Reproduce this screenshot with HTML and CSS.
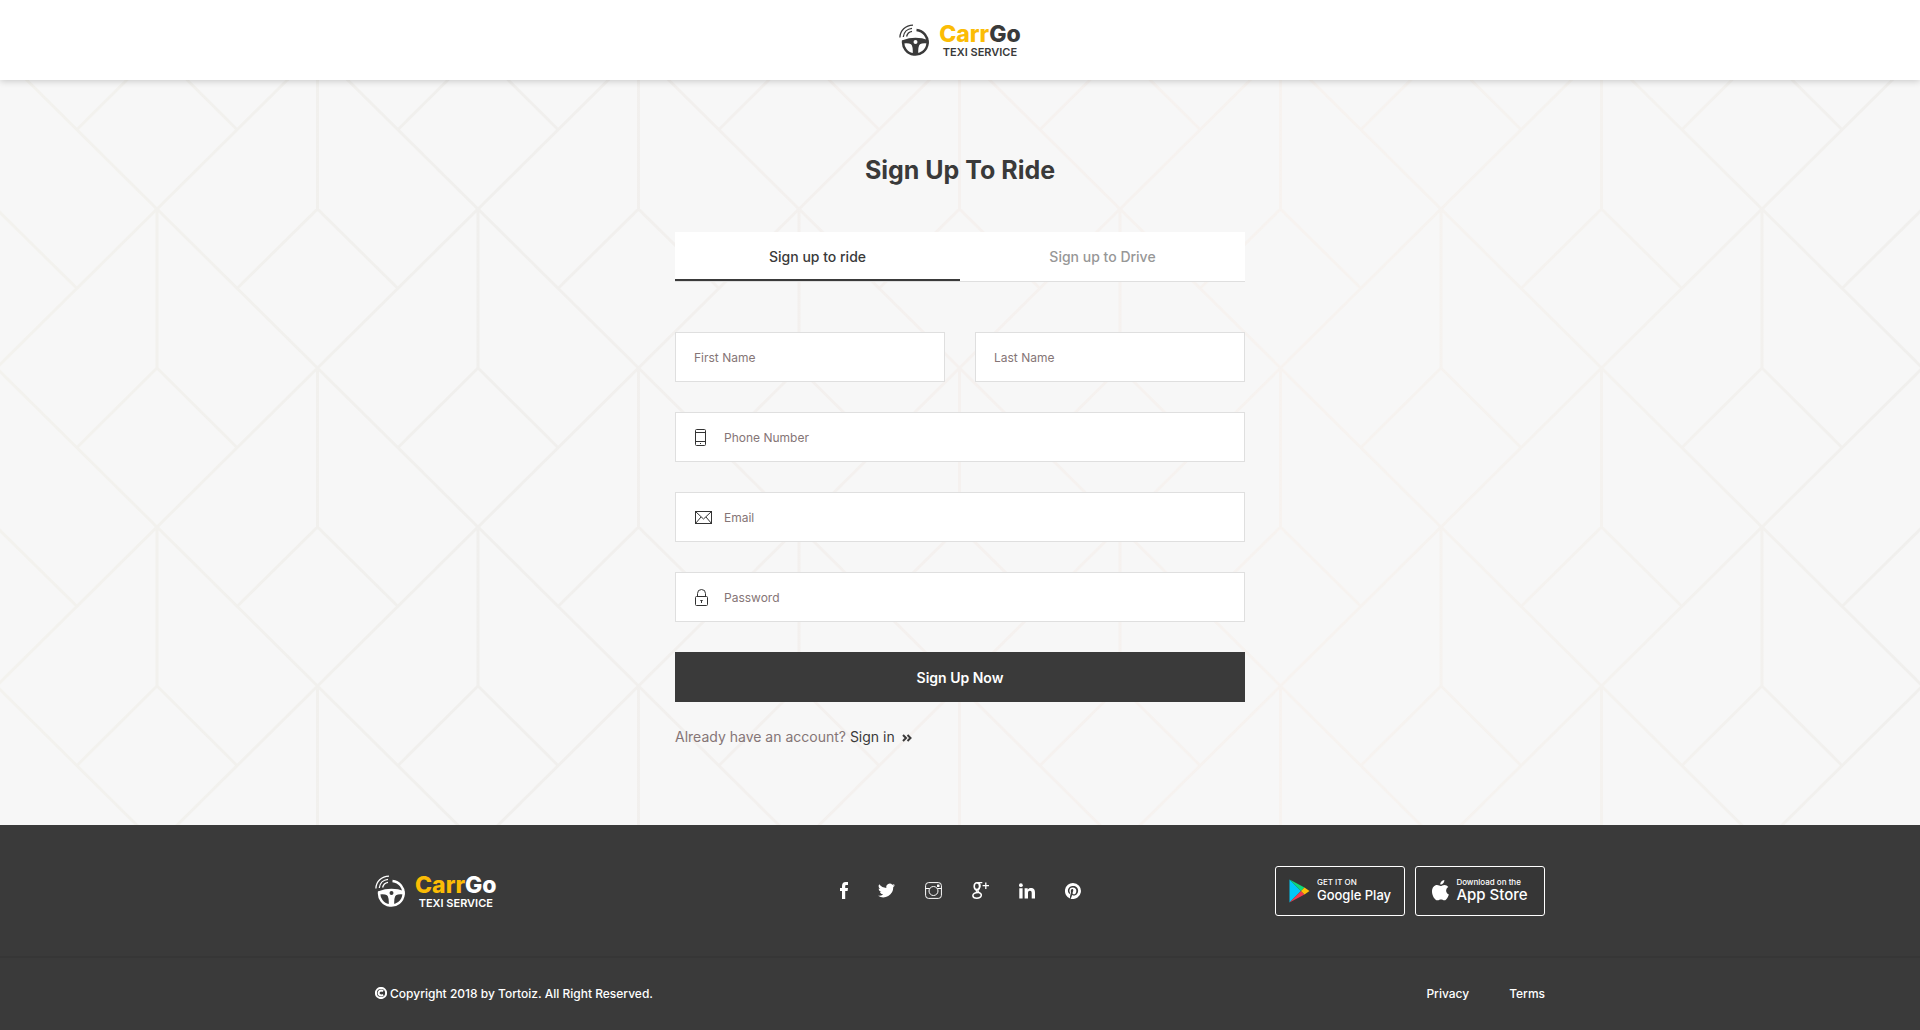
FILE: index.html
```html
<!DOCTYPE html>
<html lang="en">
<head>
    <meta charset="UTF-8">
    <meta name="viewport" content="width=device-width, initial-scale=1.0">
    <title>CarrGo - Sign Up</title>
    <link rel="stylesheet" href="styles.css">
</head>
<body>
    <!-- shared shapes -->
    <svg class="defs" aria-hidden="true">
        <symbol id="wheel" viewBox="0 0 31 32">
            <g fill="none" stroke="currentColor">
                <path stroke-width="2.500" d="M17.500 6A12.300 12.300 0 1 1 4.200 16.400"/>
                <path stroke-width="1.300" d="M.9 13.500C1 6.500 6.500 1.200 14 1.100M4.300 13C4.800 8.200 8.300 4.700 13 4.300M7.600 12.500C8.200 9.800 10.300 7.800 13 7.300"/>
            </g>
            <path fill="currentColor" fill-rule="evenodd" d="M3.500 16.200Q16.500 11.500 29.500 16.200V19.500Q23.500 18.600 21 20.200 18.800 22 19.300 30.500H13.700Q14.200 22 12 20.200 9.500 18.600 3.500 19.500ZM16.500 16a2 2 0 1 0 0 4 2 2 0 0 0 0-4Z"/>
        </symbol>
    </svg>

    <header class="header">
        <a href="#" class="logo">
            <svg class="logo-icon" aria-hidden="true"><use href="#wheel"/></svg>
            <span class="logo-text">
                <span class="logo-name"><span class="logo-accent">Carr</span>Go</span>
                <span class="logo-tag">TEXI SERVICE</span>
            </span>
        </a>
    </header>

    <main class="main">
        <svg class="pattern" aria-hidden="true">
            <defs>
                <linearGradient id="fade">
                    <stop offset="0" stop-color="#f3f2ee"/>
                    <stop offset=".26" stop-color="#f0efed"/>
                    <stop offset=".5" stop-color="#f5f1ef"/>
                    <stop offset=".68" stop-color="#f7f3f0"/>
                    <stop offset=".85" stop-color="#f4f2ef"/>
                    <stop offset="1" stop-color="#f0efed"/>
                </linearGradient>
                <pattern id="lines" patternUnits="userSpaceOnUse" x="157" y="129" width="321" height="318">
                    <path fill="none" stroke="#fff" stroke-width="3" d="M0 0 321 318M321 0 0 318M0 0V159L80 238.500M321 0V159L241 238.500M160.500 159V318M160.500 0 80 79.500M160.500 0 241 79.500"/>
                </pattern>
                <mask id="lineMask"><rect width="100%" height="100%" fill="url(#lines)"/></mask>
            </defs>
            <rect width="100%" height="100%" fill="url(#fade)" mask="url(#lineMask)"/>
        </svg>

        <div class="signup">
            <h1>Sign Up To Ride</h1>
            <div class="tabs" role="tablist">
                <button type="button" class="tab active" role="tab" aria-selected="true">Sign up to ride</button>
                <button type="button" class="tab" role="tab" aria-selected="false">Sign up to Drive</button>
            </div>
            <form class="form">
                <div class="row">
                    <label class="field"><input type="text" placeholder="First Name" aria-label="First Name"></label>
                    <label class="field"><input type="text" placeholder="Last Name" aria-label="Last Name"></label>
                </div>
                <label class="field">
                    <svg class="field-icon" viewBox="-1 -1 18 18" aria-hidden="true"><rect x=".5" y=".5" width="10" height="16" rx="1"/><path d="M.5 3.500h10M.5 12.500h10M5 14.500h1"/></svg>
                    <input type="tel" placeholder="Phone Number" aria-label="Phone Number">
                </label>
                <label class="field">
                    <svg class="field-icon" viewBox="-1 -1 18 18" aria-hidden="true"><rect x=".5" y="2.500" width="16" height="12"/><path d="M.5 2.500 8.500 10l8-7.500M.5 14.500 6 8M16.500 14.500 11 8"/></svg>
                    <input type="email" placeholder="Email" aria-label="Email">
                </label>
                <label class="field">
                    <svg class="field-icon" viewBox="-1 -1 18 18" aria-hidden="true"><rect x=".5" y="7.500" width="12" height="9" rx="1"/><path d="M2.500 7.500V4.500a4 4 0 0 1 8 0V7.500M5.300 11.500h2.400M6.500 11v3"/></svg>
                    <input type="password" placeholder="Password" aria-label="Password">
                </label>
                <button type="submit" class="submit">Sign Up Now</button>
            </form>
            <p class="signin">Already have an account? <a href="#">Sign in <svg class="chevrons" viewBox="0 0 10 8" aria-hidden="true"><path d="M1 1l3 3-3 3M5.500 1l3 3-3 3"/></svg></a></p>
        </div>
    </main>

    <footer class="footer">
        <div class="container footer-top">
            <a href="#" class="logo logo-light">
                <svg class="logo-icon" aria-hidden="true"><use href="#wheel"/></svg>
                <span class="logo-text">
                    <span class="logo-name"><span class="logo-accent">Carr</span>Go</span>
                    <span class="logo-tag">TEXI SERVICE</span>
                </span>
            </a>
            <nav class="social">
                <a href="#" aria-label="Facebook"><svg width="8" height="17" viewBox="0 0 8 17"><path d="M2 17V9H0V6h2V4.200C2 1.500 3.300 0 5.700 0H8v3H6.400C5.500 3 5.200 3.400 5.200 4.200V6H8l-.4 3H5.200v8z"/></svg></a>
                <a href="#" aria-label="Twitter"><svg width="17" height="17" viewBox="0 0 24 24"><path d="M24 4.600a10 10 0 0 1-2.800.8 5 5 0 0 0 2.100-2.700 10 10 0 0 1-3.100 1.200 4.900 4.900 0 0 0-8.400 4.500A14 14 0 0 1 1.700 3.200a4.900 4.900 0 0 0 1.500 6.500 5 5 0 0 1-2.200-.6v.1a4.900 4.900 0 0 0 3.900 4.800 5 5 0 0 1-2.200.1 4.900 4.900 0 0 0 4.600 3.400A10 10 0 0 1 0 19.500 14 14 0 0 0 21.500 7.100 10 10 0 0 0 24 4.600z"/></svg></a>
                <a href="#" aria-label="Instagram"><svg width="17" height="17" viewBox="0 0 17 17"><g fill="none" stroke="#fff"><rect x=".6" y=".6" width="15.800" height="15.800" rx="3"/><circle cx="8.500" cy="9" r="4.500"/><path d="M.6 6.500h4M12.400 6.500h4"/></g><rect x="12" y="2.500" width="2.500" height="2.500" rx=".5"/></svg></a>
                <a href="#" aria-label="Google Plus"><svg width="17" height="17" viewBox="0 0 17 17"><g fill="none" stroke="#fff"><ellipse cx="4.900" cy="4.200" rx="2.700" ry="3.400" stroke-width="1.600"/><path stroke-width="1.200" d="M5 .7h5.300M7 .9C8.600 2.500 8.300 5.500 6.600 7 5.400 8 5.600 8.900 6.900 9.600"/><path stroke-width="1.500" d="M5 7.700C3.700 8.700 4 9.300 6.400 10.300 9 11.400 9.800 12.400 9 14.200 8 16.800 1.200 16.900.9 13.900.7 11.600 3 10.700 6.200 10.500"/><path stroke-width="1.300" d="M13.800.5v6.400M10.600 3.700H17"/></g></svg></a>
                <a href="#" aria-label="LinkedIn"><svg width="16" height="16" viewBox="0 0 16 16"><circle cx="1.900" cy="2.200" r="1.900"/><path d="M.3 5.300h3.300V15.500H.3zM5.600 5.300h3.100v1.400C9.300 5.600 10.400 5 11.800 5 15 5 16 6.900 16 9.800v5.700h-3.300v-5.100c0-1.400-.2-2.600-1.800-2.600S9 9 9 10.300v5.200H5.600z"/></svg></a>
                <a href="#" aria-label="Pinterest"><svg width="16" height="16" viewBox="0 0 24 24"><path d="M12 0a12 12 0 0 0-4.400 23.200c-.1-.9-.2-2.400 0-3.400l1.400-6s-.3-.7-.3-1.800c0-1.700 1-2.900 2.200-2.900 1 0 1.500.8 1.500 1.700 0 1-.7 2.600-1 4-.3 1.200.6 2.200 1.800 2.200 2.100 0 3.800-2.200 3.800-5.500 0-2.900-2.100-4.900-5-4.900a5.200 5.200 0 0 0-5.400 5.200c0 1 .4 2.100.9 2.700.1.100.1.200.1.400l-.4 1.300c0 .2-.2.300-.4.200-1.500-.7-2.400-2.900-2.400-4.700 0-3.800 2.700-7.200 7.900-7.200 4.100 0 7.400 3 7.400 6.900 0 4.100-2.600 7.500-6.200 7.500-1.200 0-2.400-.6-2.800-1.400l-.7 2.900c-.3 1-1 2.300-1.500 3.100A12 12 0 1 0 12 0z"/></svg></a>
            </nav>
            <div class="stores">
                <a href="#" class="store">
                    <svg width="21" height="24" viewBox="0 0 21 24" aria-hidden="true"><path fill="#00c8f8" d="M.5.5 12 12 .5 23.500z"/><path fill="#10d878" d="M.5.5 15.500 8.500 12 12z"/><path fill="#f03a4c" d="M.5 23.500 15.500 15.500 12 12z"/><path fill="#ffc107" d="M15.500 8.500 20.500 12l-5 3.500L12 12z"/></svg>
                    <span class="store-text"><small>GET IT ON</small><b class="google">Google Play</b></span>
                </a>
                <a href="#" class="store">
                    <svg width="17" height="21" viewBox="0 0 17 21" aria-hidden="true"><path fill="#fff" d="M12.300 0c.2 2.500-1.700 4.700-4 4.600C8.100 2.300 10.100.2 12.300 0zM8.700 6c.8 0 2-1.100 3.800-1.100 1.500 0 2.900.8 3.800 2-3.200 1.900-2.700 6.300.6 7.500-.7 2-2.500 5.800-4.400 5.900-1.300 0-1.800-.8-3.500-.8s-2.200.8-3.500.8C2.800 20.400 0 15.300 0 11.400 0 7.300 2.500 5 5 5c1.600 0 2.800 1 3.700 1z"/></svg>
                    <span class="store-text"><small>Download on the</small><b class="apple">App Store</b></span>
                </a>
            </div>
        </div>
        <div class="footer-bottom">
            <div class="container legal">
                <p class="copyright"><svg width="12" height="12" viewBox="0 0 12 12" aria-hidden="true"><circle cx="6" cy="6" r="5.100"/><path d="M8 4.400A2.500 2.500 0 1 0 8 7.600"/></svg>Copyright 2018 by Tortoiz. All Right Reserved.</p>
                <nav class="links"><a href="#">Privacy</a><a href="#">Terms</a></nav>
            </div>
        </div>
    </footer>
</body>
</html>
```

FILE: styles.css
```css
* {
    box-sizing: border-box;
}
body {
    margin: 0;
    font-family: Inter, "Liberation Sans", sans-serif;
    font-size: 12px;
    color: #3a3a3a;
    background: #f7f7f7;
}
a {
    color: inherit;
    text-decoration: none;
}
button,
input {
    font-family: inherit;
    border: none;
    border-radius: 0;
}
.defs {
    display: none;
}
.container {
    max-width: 1170px;
    margin: 0 auto;
}

/* header */
.header {
    position: relative;
    z-index: 1;
    display: flex;
    align-items: center;
    justify-content: center;
    height: 80px;
    background: #fff;
    box-shadow: 0 1px 7px rgba(0, 0, 0, 0.2);
}
.logo {
    display: flex;
    align-items: center;
    gap: 9px;
    color: #3a3a3a;
}
.logo-light {
    color: #fff;
}
.logo-icon {
    width: 31px;
    height: 32px;
}
.logo-text {
    display: flex;
    flex-direction: column;
    align-items: center;
}
.logo-name {
    font-size: 23px;
    font-weight: 800;
    line-height: 24px;
}
.logo-accent {
    color: #fbbc05;
}
.logo-tag {
    font-size: 11px;
    font-weight: 600;
    line-height: 12px;
}

/* sign up */
.main {
    position: relative;
    padding: 70px 15px 76px;
}
.pattern {
    position: absolute;
    top: 0;
    left: 0;
    width: 100%;
    height: 100%;
}
.signup {
    position: relative;
    max-width: 570px;
    margin: 0 auto;
}
h1 {
    margin: 0 0 42px;
    font-size: 25px;
    font-weight: 700;
    line-height: 40px;
    text-align: center;
}
.tabs {
    display: flex;
    margin-bottom: 50px;
    background: #fff;
    border-bottom: 1px solid #dfdfdf;
}
.tab {
    flex: 1;
    height: 49px;
    padding: 2px 0 0;
    font-size: 14px;
    font-weight: 500;
    color: #979797;
    background: none;
    border-bottom: 2px solid transparent;
    cursor: pointer;
}
.tab.active {
    color: #3a3a3a;
    border-color: #3a3a3a;
}
.form {
    display: grid;
    gap: 30px;
}
.row {
    display: grid;
    grid-template-columns: 1fr 1fr;
    gap: 30px;
}
.field {
    display: flex;
    align-items: center;
    gap: 12px;
    height: 50px;
    padding: 0 18px;
    background: #fff;
    border: 1px solid #dfdfdf;
}
.field-icon {
    flex: none;
    width: 18px;
    height: 18px;
    overflow: visible;
    fill: none;
    stroke: #333;
}
.field input {
    flex: 1;
    min-width: 0;
    height: 100%;
    padding: 0;
    font-size: 12px;
    color: #3a3a3a;
    background: none;
    outline: none;
}
.field input::placeholder {
    color: #857576;
    opacity: 1;
}
.submit {
    height: 50px;
    padding: 0;
    font-size: 14px;
    font-weight: 600;
    color: #fff;
    background: #3a3a3a;
    cursor: pointer;
}
.signin {
    margin: 23px 0 0;
    font-size: 14px;
    line-height: 24px;
    color: #857576;
}
.signin a {
    color: #3a3a3a;
}
.chevrons {
    width: 10px;
    height: 8px;
    margin-left: 3px;
    fill: none;
    stroke: #3a3a3a;
    stroke-width: 2;
}

/* footer */
.footer {
    color: #fff;
    background: #3a3a3a;
}
.footer-top {
    display: grid;
    grid-template-columns: 1fr auto 1fr;
    align-items: center;
    height: 131px;
}
.social {
    display: flex;
    align-items: center;
    gap: 30px;
}
.social a {
    display: flex;
}
.social svg {
    fill: #fff;
}
.stores {
    display: flex;
    justify-content: flex-end;
    gap: 10px;
}
.store {
    display: flex;
    align-items: center;
    justify-content: center;
    gap: 7px;
    width: 130px;
    height: 50px;
    background: #363636;
    border: 1px solid #fff;
    border-radius: 3px;
}
.store-text {
    display: flex;
    flex-direction: column;
}
.store small {
    font-size: 8px;
    font-weight: 500;
    line-height: 9px;
}
.store b {
    font-weight: 500;
    line-height: 16px;
}
.google {
    font-size: 13px;
}
.apple {
    font-size: 15px;
}
.footer-bottom {
    border-top: 2px solid #363636;
}
.legal {
    display: flex;
    align-items: center;
    justify-content: space-between;
    height: 72px;
    padding-bottom: 2px;
    font-weight: 500;
}
.copyright {
    display: flex;
    align-items: center;
    gap: 3px;
    margin: 0;
}
.copyright svg {
    fill: none;
    stroke: #fff;
    stroke-width: 2;
}
.links {
    display: flex;
    gap: 40px;
}
```
